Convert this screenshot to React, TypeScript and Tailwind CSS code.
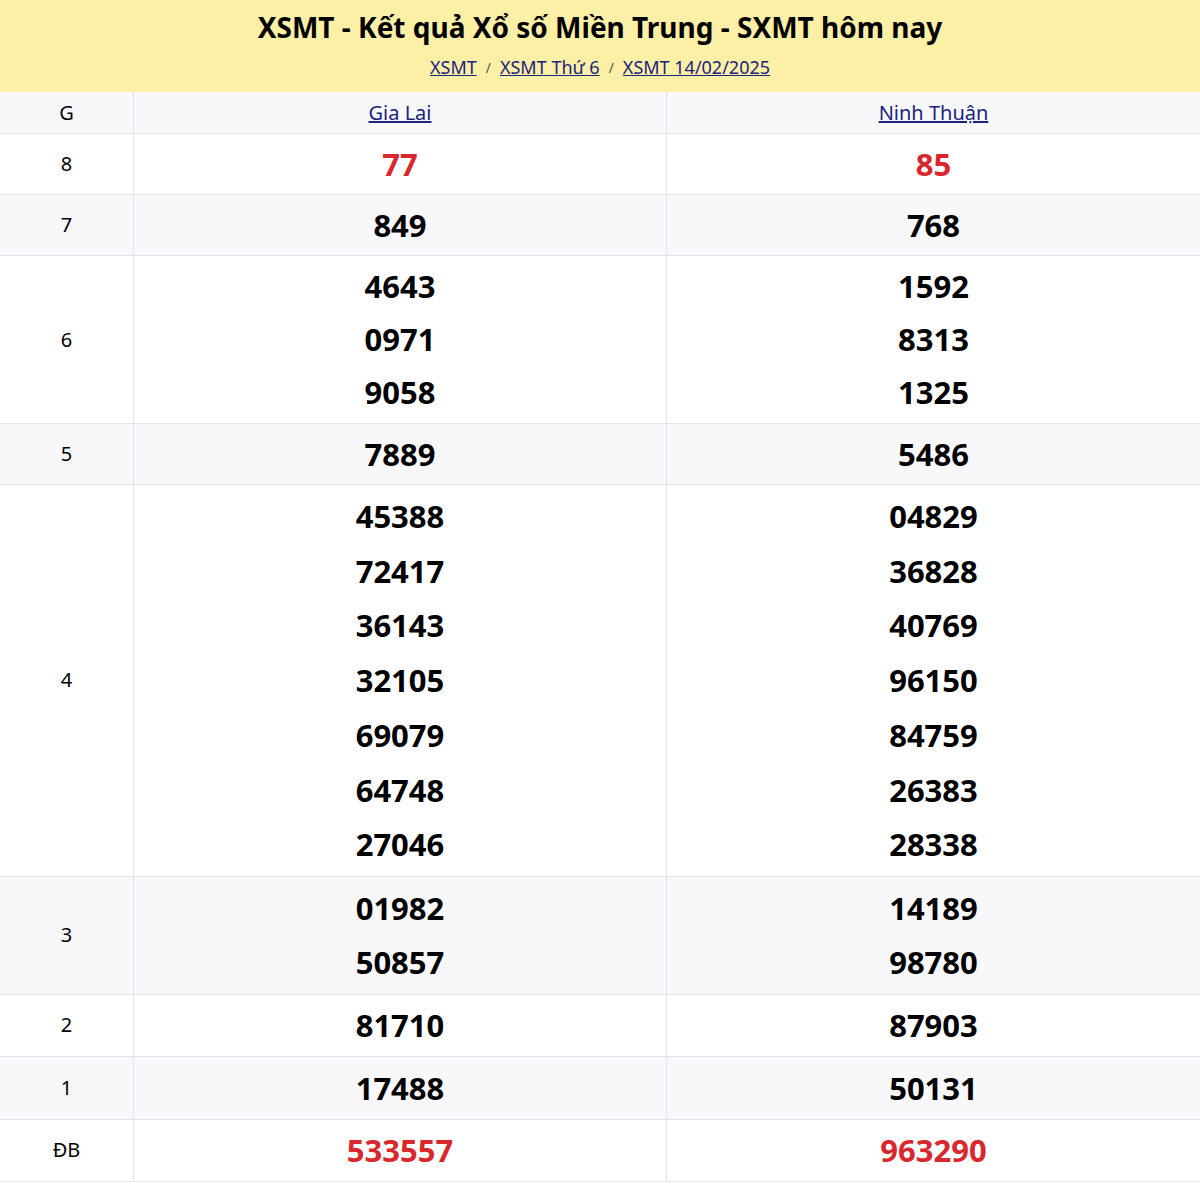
const rows: { g: string; a: string[]; b: string[]; gray: boolean; red?: boolean; lh: string }[] = [
  { g: '8', a: ['77'], b: ['85'], gray: false, red: true, lh: 'leading-[52px]' },
  { g: '7', a: ['849'], b: ['768'], gray: true, lh: 'leading-[52px]' },
  { g: '6', a: ['4643', '0971', '9058'], b: ['1592', '8313', '1325'], gray: false, lh: 'leading-[53px]' },
  { g: '5', a: ['7889'], b: ['5486'], gray: true, lh: 'leading-[52px]' },
  { g: '4', a: ['45388', '72417', '36143', '32105', '69079', '64748', '27046'], b: ['04829', '36828', '40769', '96150', '84759', '26383', '28338'], gray: false, lh: 'leading-[54.7px]' },
  { g: '3', a: ['01982', '50857'], b: ['14189', '98780'], gray: true, lh: 'leading-[54.5px]' },
  { g: '2', a: ['81710'], b: ['87903'], gray: false, lh: 'leading-[53px]' },
  { g: '1', a: ['17488'], b: ['50131'], gray: true, lh: 'leading-[54px]' },
  { g: 'ĐB', a: ['533557'], b: ['963290'], gray: false, red: true, lh: 'leading-[53px]' },
];

export default function App() {
  return (
    <div className="w-[1200px] h-[1193px] overflow-hidden bg-white font-['Roboto',sans-serif] text-black">
      {/* Header */}
      <div className="h-[92px] bg-[#fcefa6] flex flex-col items-center pt-[8px]">
        <h1 className="text-[28px] font-bold leading-[38px]">XSMT - Kết quả Xổ số Miền Trung - SXMT hôm nay</h1>
        <div className="mt-[8px] flex items-center gap-[9px] text-[18px] font-['Liberation_Sans',sans-serif] text-[#1a237e]">
          <a className="underline">XSMT</a>
          <span className="text-[#555] text-[14px]">/</span>
          <a className="underline">XSMT Thứ 6</a>
          <span className="text-[#555] text-[14px]">/</span>
          <a className="underline">XSMT 14/02/2025</a>
        </div>
      </div>

      {/* Table */}
      <div className="grid grid-cols-[134px_533px_533px]">
        <div className="h-[42px] bg-[#f8f8fa] border-b border-r border-[#e4e4e8] flex items-center justify-center text-[20px] font-['Liberation_Sans',sans-serif]">G</div>
        <div className="h-[42px] bg-[#f8f8fa] border-b border-r border-[#e4e4e8] flex items-center justify-center text-[20px] font-['Liberation_Sans',sans-serif] text-[#1a237e]">
          <a className="underline">Gia Lai</a>
        </div>
        <div className="h-[42px] bg-[#f8f8fa] border-b border-[#e4e4e8] flex items-center justify-center text-[20px] font-['Liberation_Sans',sans-serif] text-[#1a237e]">
          <a className="underline">Ninh Thuận</a>
        </div>
        {rows.map((r) => {
          const bg = r.gray ? 'bg-[#f8f8fa]' : 'bg-white';
          const num = `text-[31px] font-bold ${r.lh} ${r.red ? 'text-[#d9272e]' : 'text-black'}`;
          return (
            <div key={r.g} className="contents">
              <div className={`${bg} border-b border-r border-[#e4e4e8] flex items-center justify-center text-[20px] font-['Liberation_Sans',sans-serif]`}>{r.g}</div>
              <div className={`${bg} border-b border-r border-[#e4e4e8] flex flex-col items-center py-[4px]`}>
                {r.a.map((n, i) => (
                  <span key={i} className={num}>{n}</span>
                ))}
              </div>
              <div className={`${bg} border-b border-[#e4e4e8] flex flex-col items-center py-[4px]`}>
                {r.b.map((n, i) => (
                  <span key={i} className={num}>{n}</span>
                ))}
              </div>
            </div>
          );
        })}
      </div>
    </div>
  );
}
